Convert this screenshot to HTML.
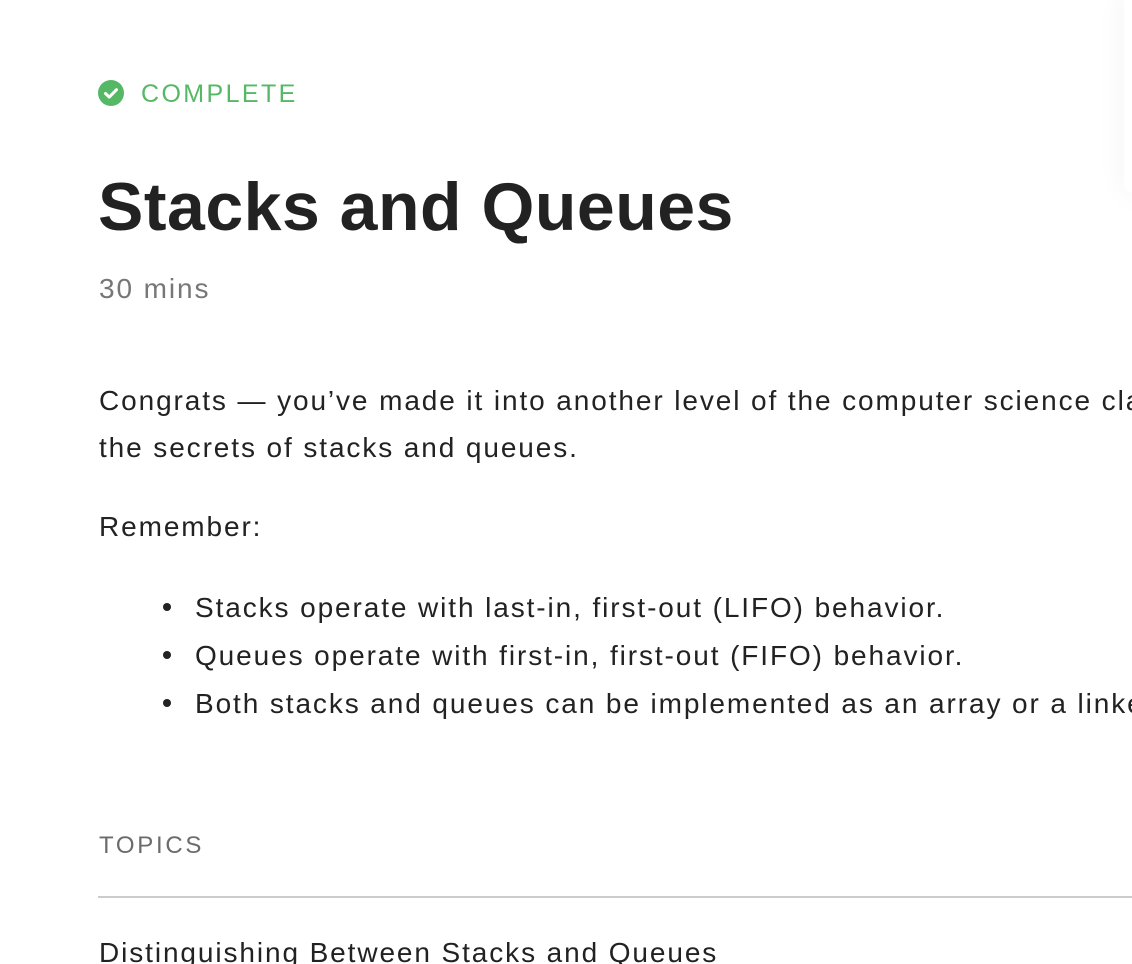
<!DOCTYPE html>
<html><head><meta charset="utf-8"><style>
html,body{margin:0;padding:0;width:1132px;height:964px;overflow:hidden;background:#fff;font-family:"Liberation Sans",sans-serif;color:#222}
#w{position:absolute;left:0;top:0;width:1132px;height:964px;overflow:hidden}
.a{position:absolute;line-height:1;white-space:nowrap}
.b{font-size:28px;letter-spacing:1.9px}
.dot{position:absolute;width:8px;height:8px;border-radius:50%;background:#222}
</style></head><body><div id="w">
<div style="position:absolute;left:1124px;top:-10px;width:40px;height:202px;background:#fff;border-radius:6px;box-shadow:0 0 30px rgba(0,0,0,0.05)"></div>
<svg style="position:absolute;left:98px;top:80px" width="26" height="26" viewBox="0 0 26 26"><circle cx="13" cy="13" r="13" fill="#55b865"/><path d="M7.5 13.5l3.8 3.6 7.2-7.4" stroke="#fff" stroke-width="3" fill="none" stroke-linecap="round" stroke-linejoin="round"/></svg>
<div class="a" style="left:141px;top:82px;font-size:25px;letter-spacing:2.4px;color:#55b865">COMPLETE</div>
<div class="a" style="left:98px;top:173px;font-size:68px;font-weight:bold;letter-spacing:0.5px;color:#222">Stacks and Queues</div>
<div class="a b" style="left:99px;top:275px;color:#777">30 mins</div>
<div class="a b" style="left:99px;top:387px">Congrats — you’ve made it into another level of the computer science class</div>
<div class="a b" style="left:99px;top:434px">the secrets of stacks and queues.</div>
<div class="a b" style="left:99px;top:513px">Remember:</div>
<div class="dot" style="left:163px;top:603px"></div>
<div class="dot" style="left:163px;top:651px"></div>
<div class="dot" style="left:163px;top:699px"></div>
<div class="a b" style="left:195px;top:594px">Stacks operate with last-in, first-out (LIFO) behavior.</div>
<div class="a b" style="left:195px;top:642px">Queues operate with first-in, first-out (FIFO) behavior.</div>
<div class="a b" style="left:195px;top:690px">Both stacks and queues can be implemented as an array or a linked list.</div>
<div class="a" style="left:99px;top:834px;font-size:24px;letter-spacing:2.7px;color:#6b6b6b">TOPICS</div>
<div style="position:absolute;left:98px;top:896px;width:1034px;height:2px;background:#ccc"></div>
<div class="a b" style="left:99px;top:939px">Distinguishing Between Stacks and Queues</div>
</div></body></html>
